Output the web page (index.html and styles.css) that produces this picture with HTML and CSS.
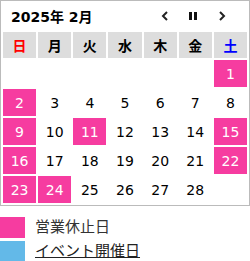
FILE: index.html
```html
<!DOCTYPE html>
<html lang="ja">
<head>
<meta charset="utf-8">
<link rel="stylesheet" href="styles.css">
</head>
<body>
<div class="cal">
  <div class="cal-head">
    <span class="title">2025年 2月</span>
    <div class="nav">
      <span class="nav-btn"><svg width="8" height="10" viewBox="0 0 8 10"><path d="M6 1 L2 5 L6 9" fill="none" stroke="#222" stroke-width="2"/></svg></span>
      <span class="nav-btn"><svg width="9" height="8" viewBox="0 0 9 8"><rect x="0" y="0" width="3" height="8" fill="#111"/><rect x="5" y="0" width="3" height="8" fill="#111"/></svg></span>
      <span class="nav-btn"><svg width="8" height="10" viewBox="0 0 8 10"><path d="M2 1 L6 5 L2 9" fill="none" stroke="#222" stroke-width="2"/></svg></span>
    </div>
  </div>
  <table class="grid">
    <thead>
      <tr><th class="sun">日</th><th>月</th><th>火</th><th>水</th><th>木</th><th>金</th><th class="sat">土</th></tr>
    </thead>
    <tbody>
      <tr><td></td><td></td><td></td><td></td><td></td><td></td><td class="off">1</td></tr>
      <tr><td class="off">2</td><td>3</td><td>4</td><td>5</td><td>6</td><td>7</td><td>8</td></tr>
      <tr><td class="off">9</td><td>10</td><td class="off">11</td><td>12</td><td>13</td><td>14</td><td class="off">15</td></tr>
      <tr><td class="off">16</td><td>17</td><td>18</td><td>19</td><td>20</td><td>21</td><td class="off">22</td></tr>
      <tr><td class="off">23</td><td class="off">24</td><td>25</td><td>26</td><td>27</td><td>28</td><td></td></tr>
    </tbody>
  </table>
</div>
<ul class="legend">
  <li class="legend-item"><span class="swatch swatch-off"></span><span class="legend-text">営業休止日</span></li>
  <li class="legend-item"><span class="swatch swatch-event"></span><a class="legend-text legend-link" href="#">イベント開催日</a></li>
</ul>
</body>
</html>
```
FILE: styles.css
```css
html, body {
  margin: 0;
  padding: 0;
  background: #fff;
}
body {
  font-family: "DejaVu Sans", "Noto Sans CJK JP", sans-serif;
  color: #000;
}
.cal {
  width: 250px;
  box-sizing: border-box;
  border: 1px solid #bbb;
}
.cal-head {
  display: flex;
  align-items: center;
  height: 29px;
  padding-left: 10px;
  padding-right: 23px;
}
.title {
  font-weight: bold;
  font-size: 14px;
}
.nav {
  margin-left: auto;
  display: flex;
  align-items: center;
  gap: 20px;
}
.nav-btn {
  display: flex;
  align-items: center;
}
.grid {
  width: 100%;
  table-layout: fixed;
  border-collapse: separate;
  border-spacing: 2px;
}
.grid th {
  background: #ddd;
  height: 26px;
  padding: 0;
  font-size: 14px;
  font-weight: bold;
  text-align: center;
}
.grid th.sun { color: #f00; }
.grid th.sat { color: #00f; }
.grid td {
  height: 27px;
  padding: 0;
  font-size: 14px;
  text-align: center;
}
.grid td.off {
  background: #f63ca0;
  color: #fff;
}
.legend {
  list-style: none;
  margin: 11px 0 0;
  padding: 0;
}
.legend-item {
  display: flex;
  align-items: center;
  gap: 10px;
  margin-bottom: 3px;
}
.swatch {
  width: 25px;
  height: 21px;
  flex: none;
}
.swatch-off { background: #f63ca0; }
.swatch-event { background: #63b9e8; }
.legend-text {
  font-size: 15px;
  line-height: 21px;
  color: #333;
}
.legend-link {
  color: #222;
  text-decoration: underline;
}
```
